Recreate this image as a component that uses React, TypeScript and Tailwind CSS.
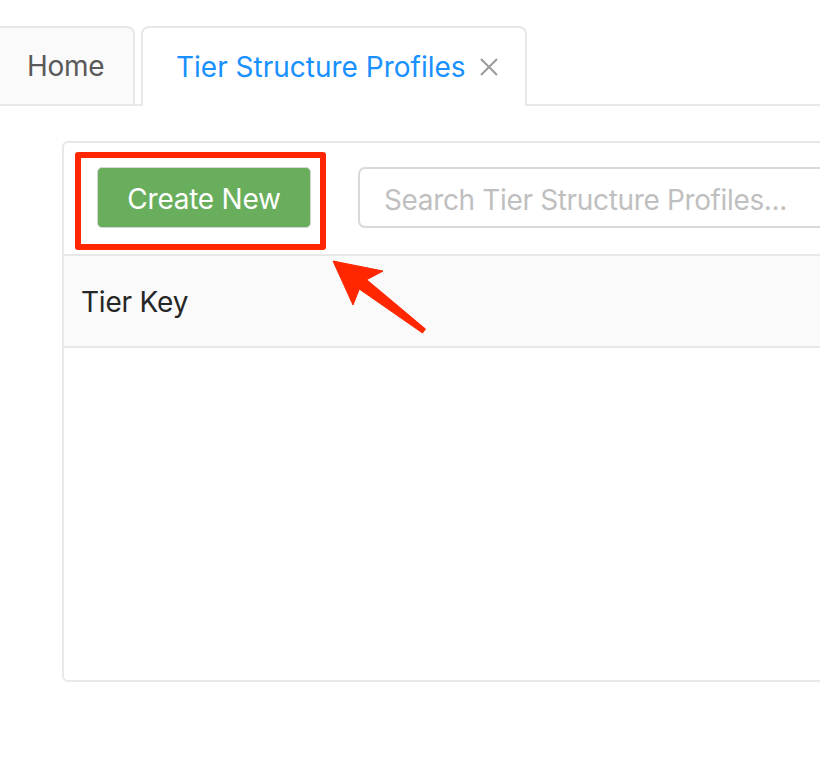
import React from "react";

export default function App() {
  return (
    <div className="relative w-[820px] h-[772px] bg-white overflow-hidden font-['Inter','Liberation_Sans',sans-serif]">
      {/* Tab bar */}
      <div className="flex items-end pt-[26px] border-b-2 border-[#e8e8e8]">
        <div className="h-[78px] w-[135px] flex items-center pl-[27px] bg-[#fafafa] border-2 border-l-0 border-b-0 border-[#e8e8e8] rounded-tr-[8px] text-[28px] tracking-[-0.3px] text-[#595959]">
          Home
        </div>
        <div className="ml-[6px] -mb-[2px] h-[80px] w-[386px] flex items-center pl-[33px] bg-white border-2 border-b-0 border-[#e8e8e8] rounded-t-[8px] text-[28px] text-[#1890ff]">
          <span>Tier Structure Profiles</span>
          <svg className="ml-[14px]" width="18" height="18" viewBox="0 0 18 18" fill="none">
            <path d="M1 1L17 17M17 1L1 17" stroke="#9a9a9a" strokeWidth="2" />
          </svg>
        </div>
      </div>

      {/* Card */}
      <div className="ml-[62px] mt-[35px] w-[800px] h-[541px] border-2 border-[#e8e8e8] rounded-[6px] bg-white">
        <div className="flex items-center pl-[33px] pt-[24px] pb-[26px]">
          <button className="w-[214px] h-[61px] rounded-[5px] border border-[#d6d6d6] bg-[#68ae5c] text-white text-[28px] tracking-[-0.25px] flex items-center justify-center pt-[3px]">
            Create New
          </button>
          <div className="ml-[47px] h-[61px] flex-1 border-2 border-[#d9d9d9] rounded-[7px] flex items-center pl-[24px] pt-[4px] text-[28px] tracking-[-0.35px] text-[#bfbfbf]">
            Search Tier Structure Profiles...
          </div>
        </div>
        <div className="h-[94px] border-y-2 border-[#e8e8e8] bg-[#fafafa] flex items-center pl-[17px] pt-[2px] text-[28px] tracking-[-0.2px] text-[#262626]">
          Tier Key
        </div>
      </div>

      {/* Annotation rectangle */}
      <div className="absolute left-[75px] top-[152px] w-[251px] h-[98px] border-[6px] border-[#ff2600] rounded-[3px]" />

      {/* Annotation arrow */}
      <svg className="absolute left-0 top-0" width="820" height="772" viewBox="0 0 820 772" style={{ pointerEvents: "none" }}>
        <polygon
          points="333,261 383,271 366.7,279.7 425.5,329 422.5,333 359.3,289.1 353,305"
          fill="#ff2600"
          stroke="#ff2600"
          strokeWidth="1"
          strokeLinejoin="round"
        />
      </svg>
    </div>
  );
}
